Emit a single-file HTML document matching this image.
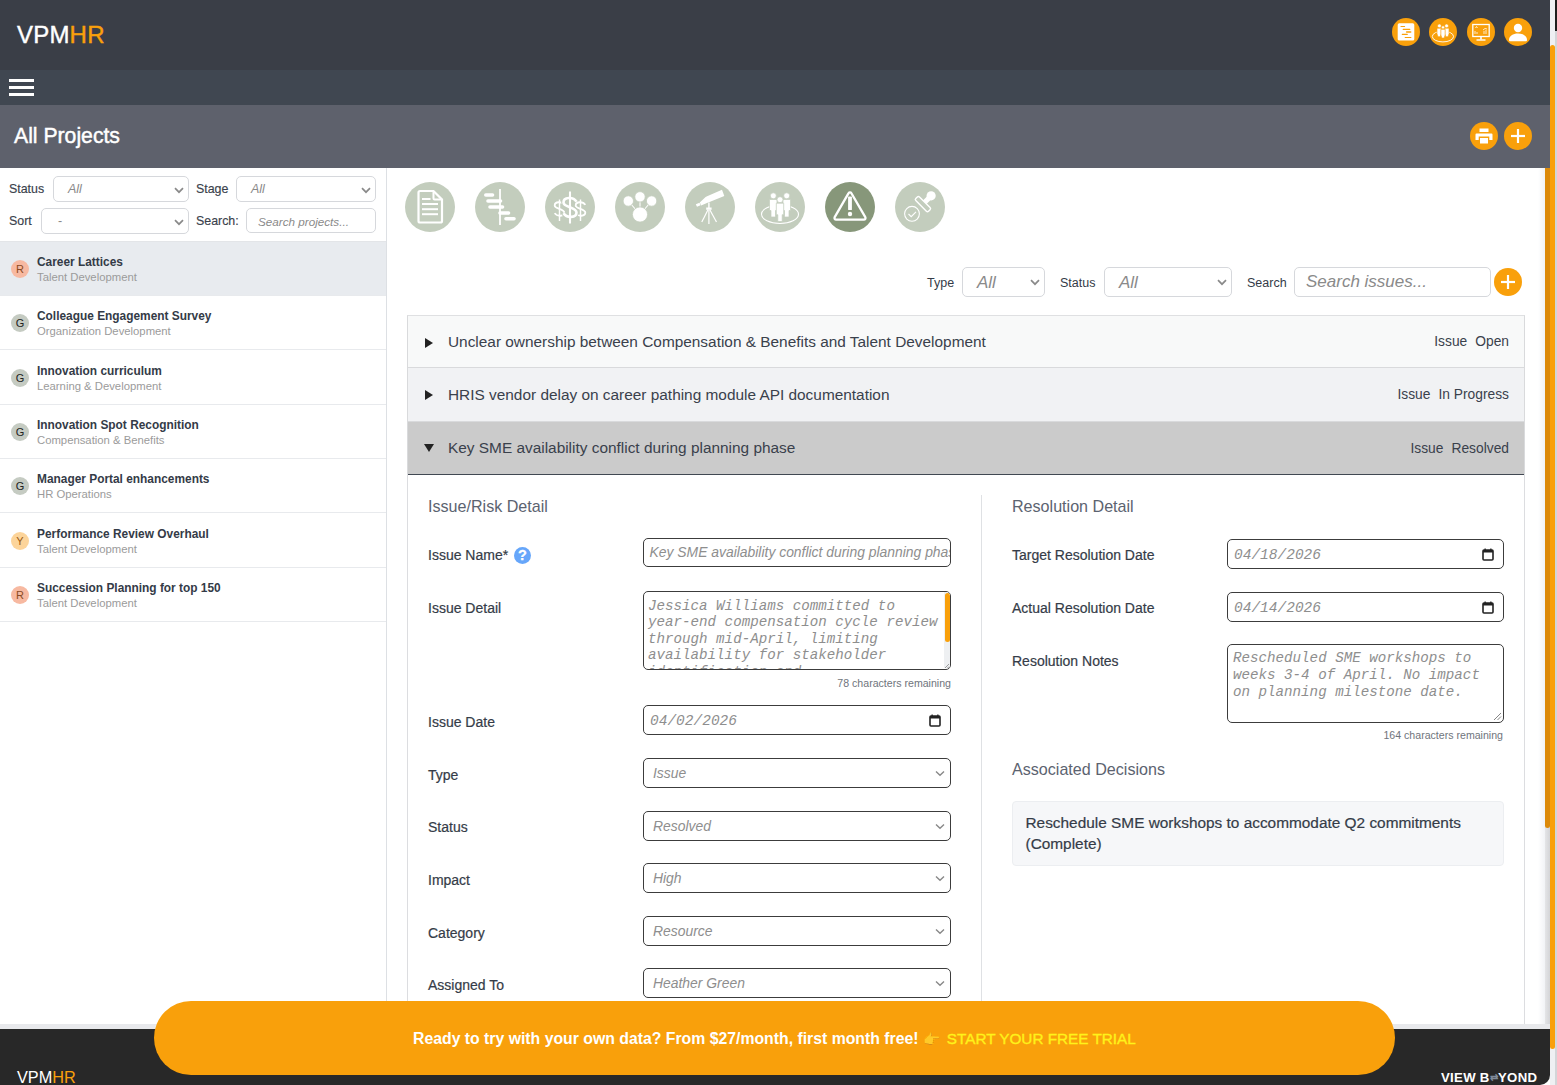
<!DOCTYPE html>
<html><head><meta charset="utf-8">
<style>
*{box-sizing:border-box;margin:0;padding:0}
html,body{width:1557px;height:1085px;overflow:hidden;background:#fff;font-family:"Liberation Sans",sans-serif;color:#343b47}
.a{position:absolute}
#top{left:0;top:0;width:1550px;height:70px;background:#3a3e47}
#nav{left:0;top:70px;width:1550px;height:35px;background:#404751}
#ttl{left:0;top:105px;width:1550px;height:63px;background:#5e616c}
.ob{position:absolute;width:28px;height:28px;border-radius:50%;background:#f9a00b}
.ob svg{position:absolute;left:0;top:0}
#side{left:0;top:168px;width:387px;height:860px;border-right:1px solid #dde0e4;background:#fff}
.lbl{position:absolute;font-size:12.4px;color:#3a414c;-webkit-text-stroke:0.15px #3a414c}
.fsel{position:absolute;border:1px solid #d6d8dc;border-radius:5px;background:#fff;height:26px}
.fsel i{position:absolute;font-size:12.5px;color:#8a8a8a;top:5px}
.chev{position:absolute;width:6.5px;height:6.5px;border-right:1.6px solid #8a8a8a;border-bottom:1.6px solid #8a8a8a;transform:rotate(45deg)}
.pi{position:absolute;left:0;width:386px;height:54px;border-bottom:1px solid #e8eaed}
.pi .dot{position:absolute;left:11px;top:18px;width:18px;height:18px;border-radius:50%;font-size:11px;text-align:center;line-height:18px}
.pi b{position:absolute;left:37px;top:13px;font-size:11.9px;color:#343b47;white-space:nowrap}
.pi span{position:absolute;left:37px;top:29px;font-size:11.3px;color:#9b9b9b;white-space:nowrap}
.mc{position:absolute;top:182px;width:50px;height:50px;border-radius:50%;background:#c3cdbd}
.mc svg{position:absolute;left:0;top:0}
.row{position:absolute;left:407px;width:1118px;height:53px;border:1px solid #d9dadc;border-top:none}
.row .t{position:absolute;left:40px;font-size:15.4px;line-height:1;color:#3a414c;white-space:nowrap}
.row .r{position:absolute;right:15px;font-size:13.8px;line-height:1;color:#3a414c;white-space:nowrap}
.flab{position:absolute;font-size:14px;color:#343b47;white-space:nowrap}
.inp{position:absolute;border:1.3px solid #3c3c3c;border-radius:5px;background:#fff}
.ph{position:absolute;font-style:italic;color:#8e8e8e;white-space:nowrap}
.mono{font-family:"Liberation Mono",monospace}
</style></head><body>
<div id="top" class="a">
 <div class="a" style="left:17px;top:20px;font-size:24px;line-height:30px;letter-spacing:0.2px;color:#fff;-webkit-text-stroke:0.4px #fff">VPM<span style="color:#f9a00b;-webkit-text-stroke:0.4px #f9a00b">HR</span></div>
 <div class="ob" style="left:1392px;top:18px"><svg width="28" height="28" viewBox="0 0 28 28"><rect x="5.7" y="5.3" width="16.6" height="17.2" rx="1.6" fill="#fff"/><g stroke="#f9a00b" stroke-width="1.1" stroke-linecap="round"><line x1="9" y1="8.5" x2="12.6" y2="8.5"/><line x1="11.2" y1="11.4" x2="17.8" y2="11.4"/><line x1="14.6" y1="14" x2="18.7" y2="14" stroke-width="1.5"/><line x1="10.3" y1="16.4" x2="15.3" y2="16.4"/><line x1="13.2" y1="19.5" x2="18.9" y2="19.5"/></g></svg></div>
 <div class="ob" style="left:1429px;top:18px"><svg width="28" height="28" viewBox="0 0 28 28"><ellipse cx="13.9" cy="18.5" rx="10.6" ry="5.4" fill="none" stroke="#fff" stroke-width="0.9"/><g fill="#fff" stroke="#f9a00b" stroke-width="0.6"><circle cx="10.4" cy="7.9" r="1.9"/><circle cx="17.6" cy="7.9" r="1.9"/><path d="M8 10.2h4.2v5.5l-1 3h-2.2l-1-3z"/><path d="M15.8 10.2h4.2v5.5l-1 3h-2.2l-1-3z"/><circle cx="14" cy="9.4" r="1.6"/><path d="M11.9 11.3h4.2v5.8l-1 3h-2.2l-1-3z"/></g></svg></div>
 <div class="ob" style="left:1467px;top:18px"><svg width="28" height="28" viewBox="0 0 28 28"><rect x="5.8" y="6.5" width="16.4" height="12" fill="none" stroke="#fff" stroke-width="1.3"/><rect x="13.2" y="18.5" width="1.6" height="3" fill="#fff"/><rect x="9.5" y="21.3" width="9" height="1.4" fill="#fff"/><g stroke="#fff" stroke-width="0.8" fill="none"><path d="M8 16V13M10 16v-2M17 16v-3M19 16v-4M16 12l2-1.5 2 0.5"/><path d="M8.5 10l1-1.5 1 1.5"/></g></svg></div>
 <div class="ob" style="left:1504px;top:18px"><svg width="28" height="28" viewBox="0 0 28 28"><circle cx="14" cy="10" r="4.2" fill="#fff"/><path d="M5 22c0-4 4-6.5 9-6.5s9 2.5 9 6.5c0 .8-.5 1.3-1.3 1.3H6.3C5.5 23.3 5 22.8 5 22z" fill="#fff"/></svg></div>
</div>
<div id="nav" class="a">
 <div class="a" style="left:9px;top:9px;width:25px;height:3px;background:#fff"></div>
 <div class="a" style="left:9px;top:16px;width:25px;height:3px;background:#fff"></div>
 <div class="a" style="left:9px;top:23px;width:25px;height:3px;background:#fff"></div>
</div>
<div id="ttl" class="a">
 <div class="a" style="left:14px;top:18px;font-size:21.2px;line-height:26px;color:#fff;-webkit-text-stroke:0.45px #fff">All Projects</div>
 <div class="ob" style="left:1470px;top:17px"><svg width="28" height="28" viewBox="0 0 28 28"><g fill="#fff"><rect x="9.5" y="6.5" width="9" height="3.5"/><path d="M6.5 11.5h15a1 1 0 0 1 1 1V18h-3.2v-3.5H8.7V18H5.5v-5.5a1 1 0 0 1 1-1z"/><rect x="10" y="16" width="8" height="5.5"/></g></svg></div>
 <div class="ob" style="left:1504px;top:17px"><svg width="28" height="28" viewBox="0 0 28 28"><g stroke="#fff" stroke-width="2.2"><line x1="14" y1="7" x2="14" y2="21"/><line x1="7" y1="14" x2="21" y2="14"/></g></svg></div>
</div>
<div id="side" class="a">
 <div class="lbl" style="left:9px;top:14px">Status</div>
 <div class="fsel" style="left:53px;top:8px;width:136px"><i style="left:14px">All</i><svg class="a" style="right:4.5px;top:9.5px" width="10" height="7" viewBox="0 0 10 7"><path d="M1 1.2L5 5.2L9 1.2" fill="none" stroke="#8a8a8a" stroke-width="1.7"/></svg></div>
 <div class="lbl" style="left:196px;top:14px">Stage</div>
 <div class="fsel" style="left:236px;top:8px;width:140px"><i style="left:14px">All</i><svg class="a" style="right:4.5px;top:9.5px" width="10" height="7" viewBox="0 0 10 7"><path d="M1 1.2L5 5.2L9 1.2" fill="none" stroke="#8a8a8a" stroke-width="1.7"/></svg></div>
 <div class="lbl" style="left:9px;top:46px">Sort</div>
 <div class="fsel" style="left:41px;top:40px;width:148px"><i style="left:16px;font-style:normal">-</i><svg class="a" style="right:4.5px;top:9.5px" width="10" height="7" viewBox="0 0 10 7"><path d="M1 1.2L5 5.2L9 1.2" fill="none" stroke="#8a8a8a" stroke-width="1.7"/></svg></div>
 <div class="lbl" style="left:196px;top:46px">Search:</div>
 <div class="fsel" style="left:246px;top:40px;width:130px;height:25px"><i style="left:11px;font-size:11.7px;top:5.5px">Search projects...</i></div>
 <div class="a" style="left:0;top:73px;width:386px;height:1px;background:#e3e5e8"></div>
</div>
<div class="a" style="left:0;top:0">
<div class="pi" style="top:242px;background:#e8ebef;"><div class="dot" style="background:#f7b9a1;color:#8a4a22">R</div><b>Career Lattices</b><span>Talent Development</span></div>
<div class="pi" style="top:296.35px;"><div class="dot" style="background:#c5cbc2;color:#222">G</div><b>Colleague Engagement Survey</b><span>Organization Development</span></div>
<div class="pi" style="top:350.70px;"><div class="dot" style="background:#c5cbc2;color:#222">G</div><b>Innovation curriculum</b><span>Learning &amp; Development</span></div>
<div class="pi" style="top:404.59999999999997px;"><div class="dot" style="background:#c5cbc2;color:#222">G</div><b>Innovation Spot Recognition</b><span>Compensation &amp; Benefits</span></div>
<div class="pi" style="top:458.79999999999995px;"><div class="dot" style="background:#c5cbc2;color:#222">G</div><b>Manager Portal enhancements</b><span>HR Operations</span></div>
<div class="pi" style="top:513.75px;"><div class="dot" style="background:#fcd49a;color:#9a5a10">Y</div><b>Performance Review Overhaul</b><span>Talent Development</span></div>
<div class="pi" style="top:568.10px;"><div class="dot" style="background:#f7b9a1;color:#8a4a22">R</div><b>Succession Planning for top 150</b><span>Talent Development</span></div>
</div>
<div class="mc" style="left:405px;background:#c3cdbd"><svg width="50" height="50" viewBox="0 0 50 50"><path d="M13.5 10.5a1.5 1.5 0 0 1 1.5-1.5h13.5l8.5 8.5v21.5a1.5 1.5 0 0 1-1.5 1.5H15a1.5 1.5 0 0 1-1.5-1.5z" fill="none" stroke="#fff" stroke-width="2.2"/><path d="M28.5 9v7.5a1 1 0 0 0 1 1H37" fill="none" stroke="#fff" stroke-width="2"/><g stroke="#fff" stroke-width="2"><line x1="17" y1="17" x2="25.5" y2="17"/><line x1="17" y1="22" x2="33" y2="22"/><line x1="17" y1="27.2" x2="33" y2="27.2"/><line x1="17" y1="32.2" x2="33" y2="32.2"/></g></svg></div>
<div class="mc" style="left:475px;background:#c3cdbd"><svg width="50" height="50" viewBox="0 0 50 50"><g stroke="#fff" stroke-linecap="round"><line x1="25" y1="7" x2="25" y2="43" stroke-width="1.8" stroke-linecap="butt"/><g stroke-width="3.6"><line x1="10.8" y1="13" x2="17.5" y2="13"/><line x1="13" y1="19" x2="25.5" y2="19"/><line x1="15" y1="25" x2="27.5" y2="25"/><line x1="25" y1="31" x2="33.5" y2="31"/><line x1="31" y1="36.8" x2="39" y2="36.8"/></g></g></svg></div>
<div class="mc" style="left:545px;background:#c3cdbd"><svg width="50" height="50" viewBox="0 0 50 50"><path d="M19.30 22.88C16.90 19.12 9.70 19.50 9.70 23.40C9.70 27.00 19.30 26.62 19.30 30.60C19.30 34.50 12.10 34.88 9.70 31.12" fill="none" stroke="#c3cdbd" stroke-width="3.8"/><path d="M19.30 22.88C16.90 19.12 9.70 19.50 9.70 23.40C9.70 27.00 19.30 26.62 19.30 30.60C19.30 34.50 12.10 34.88 9.70 31.12" fill="none" stroke="#fff" stroke-width="1.8"/><line x1="14.5" y1="17.5" x2="14.5" y2="39" stroke="#fff" stroke-width="1.44"/><path d="M40.30 22.88C37.90 19.12 30.70 19.50 30.70 23.40C30.70 27.00 40.30 26.62 40.30 30.60C40.30 34.50 33.10 34.88 30.70 31.12" fill="none" stroke="#c3cdbd" stroke-width="3.8"/><path d="M40.30 22.88C37.90 19.12 30.70 19.50 30.70 23.40C30.70 27.00 40.30 26.62 40.30 30.60C40.30 34.50 33.10 34.88 30.70 31.12" fill="none" stroke="#fff" stroke-width="1.8"/><line x1="35.5" y1="17.5" x2="35.5" y2="39" stroke="#fff" stroke-width="1.44"/><path d="M31.50 19.73C28.25 14.47 18.50 15.00 18.50 20.46C18.50 25.50 31.50 24.98 31.50 30.54C31.50 36.00 21.75 36.52 18.50 31.27" fill="none" stroke="#c3cdbd" stroke-width="4.6"/><path d="M31.50 19.73C28.25 14.47 18.50 15.00 18.50 20.46C18.50 25.50 31.50 24.98 31.50 30.54C31.50 36.00 21.75 36.52 18.50 31.27" fill="none" stroke="#fff" stroke-width="2.6"/><line x1="25" y1="9.5" x2="25" y2="41.5" stroke="#fff" stroke-width="2.08"/></svg></div>
<div class="mc" style="left:615px;background:#c3cdbd"><svg width="50" height="50" viewBox="0 0 50 50"><g stroke="#fff" stroke-width="1.1"><line x1="13.3" y1="19" x2="25" y2="32.5"/><line x1="36.6" y1="19" x2="25" y2="32.5"/><line x1="25" y1="15" x2="25" y2="32.5"/></g><g fill="#fff" stroke="#c3cdbd" stroke-width="0.8"><circle cx="13.3" cy="19" r="5.2"/><circle cx="25" cy="14.8" r="5.2"/><circle cx="36.6" cy="19" r="5.2"/><circle cx="25" cy="32.5" r="7.6"/></g></svg></div>
<div class="mc" style="left:685px;background:#c3cdbd"><svg width="50" height="50" viewBox="0 0 50 50"><g fill="#fff"><path d="M10.8 22.3l1.2 2.4 3.6-1.5-1.1-2.4z"/><path d="M14.8 20.6l1.3 2.9 7-2.9 1.4-0.6 14.8-6.1-2.3-6.2-14.9 6.5-1.5 0.7z"/><rect x="23.2" y="20.5" width="1.4" height="5.5"/><path d="M21.2 25.5h5.4v2.3h-5.4z"/></g><g stroke="#fff" stroke-width="1.2" fill="none"><line x1="23" y1="27.8" x2="16.8" y2="40"/><line x1="23.9" y1="27.8" x2="23.9" y2="42"/><line x1="24.8" y1="27.8" x2="31.5" y2="40"/></g></svg></div>
<div class="mc" style="left:755px;background:#c3cdbd"><svg width="50" height="50" viewBox="0 0 50 50"><ellipse cx="25" cy="32.3" rx="18.5" ry="9.2" fill="none" stroke="#fff" stroke-width="1.1"/><g fill="#fff" stroke="#c3cdbd" stroke-width="0.7"><circle cx="18.3" cy="13.8" r="3"/><circle cx="31.7" cy="13.8" r="3"/><path d="M14.5 17.5h7.5v11h-1.5v6.5h-4.5v-6.5h-1.5z"/><path d="M28 17.5h7.5v11H34v6.5h-4.5v-6.5H28z"/><circle cx="25" cy="17.7" r="3"/><path d="M21.3 21.2h7.4v11.5h-1.5v6.8h-4.4v-6.8h-1.5z"/></g></svg></div>
<div class="mc" style="left:825px;background:#87977a"><svg width="50" height="50" viewBox="0 0 50 50"><path d="M23.6 11.2a1.6 1.6 0 0 1 2.8 0L40.3 35.2a1.6 1.6 0 0 1-1.4 2.4H11.1a1.6 1.6 0 0 1-1.4-2.4z" fill="none" stroke="#fff" stroke-width="2.3" stroke-linejoin="round"/><rect x="23.1" y="14.6" width="3.8" height="13.5" rx="0.6" fill="#fff"/><circle cx="25" cy="32" r="2.2" fill="#fff"/></svg></div>
<div class="mc" style="left:895px;background:#c3cdbd"><svg width="50" height="50" viewBox="0 0 50 50"><g transform="rotate(45 28 22)"><rect x="19" y="19.5" width="18" height="5.2" rx="1.5" fill="none" stroke="#fff" stroke-width="1.4"/><rect x="25.5" y="13" width="5" height="6.5" fill="#fff"/><circle cx="28" cy="10.5" r="4.6" fill="#fff"/></g><circle cx="17" cy="31.8" r="7.4" fill="none" stroke="#fff" stroke-width="1.1"/><path d="M13.5 32l2.7 2.7 4.8-4.8" fill="none" stroke="#fff" stroke-width="1.1"/></svg></div>
<div class="flab" style="left:927px;top:276px;font-size:12.5px">Type</div>
<div class="fsel" style="left:962px;top:267px;width:83px;height:30px"><i style="left:14px;top:5px;font-size:17px">All</i><svg class="a" style="right:4.5px;top:10.5px" width="10" height="7" viewBox="0 0 10 7"><path d="M1 1.2L5 5.2L9 1.2" fill="none" stroke="#8a8a8a" stroke-width="1.7"/></svg></div>
<div class="flab" style="left:1060px;top:276px;font-size:12.5px">Status</div>
<div class="fsel" style="left:1104px;top:267px;width:128px;height:30px"><i style="left:14px;top:5px;font-size:17px">All</i><svg class="a" style="right:4.5px;top:10.5px" width="10" height="7" viewBox="0 0 10 7"><path d="M1 1.2L5 5.2L9 1.2" fill="none" stroke="#8a8a8a" stroke-width="1.7"/></svg></div>
<div class="flab" style="left:1247px;top:276px;font-size:12.5px">Search</div>
<div class="fsel" style="left:1294px;top:267px;width:197px;height:30px"><i style="left:11px;top:4px;font-size:17px">Search issues...</i></div>
<div class="ob" style="left:1494px;top:268px"><svg width="28" height="28" viewBox="0 0 28 28"><g stroke="#fff" stroke-width="2.2"><line x1="14" y1="7" x2="14" y2="21"/><line x1="7" y1="14" x2="21" y2="14"/></g></svg></div>
<div class="row" style="top:315px;height:53px;border-top:1px solid #dfe0e2;background:#f8f9f9"><svg class="a" style="left:16.5px;top:21.5px" width="8" height="10"><path d="M0 0L8 5L0 10z" fill="#222"/></svg><div class="t" style="top:17.5px">Unclear ownership between Compensation &amp; Benefits and Talent Development</div><div class="r" style="top:19px"><span>Issue</span><span style="margin-left:8px">Open</span></div></div>
<div class="row" style="top:368px;height:54px;background:#f1f2f4"><svg class="a" style="left:16.5px;top:21.5px" width="8" height="10"><path d="M0 0L8 5L0 10z" fill="#222"/></svg><div class="t" style="top:19px">HRIS vendor delay on career pathing module API documentation</div><div class="r" style="top:20px"><span>Issue</span><span style="margin-left:8px">In Progress</span></div></div>
<div class="row" style="top:422px;height:53px;background:#cbcbcb;border-bottom:1.5px solid #414852"><svg class="a" style="left:16px;top:22px" width="10" height="8"><path d="M0 0L10 0L5 8z" fill="#222"/></svg><div class="t" style="top:18.2px">Key SME availability conflict during planning phase</div><div class="r" style="top:19.8px"><span>Issue</span><span style="margin-left:8px">Resolved</span></div></div>
<div class="a" style="left:407px;top:474px;width:1px;height:552px;background:#dcdde0"></div>
<div class="a" style="left:1524px;top:474px;width:1px;height:552px;background:#dcdde0"></div>
<div class="a" style="left:981px;top:495px;width:1px;height:531px;background:#dfe1e4"></div>
<div class="a" style="left:428px;top:498.4px;font-size:16.1px;line-height:1;white-space:nowrap;color:#5c6370">Issue/Risk Detail</div>
<div class="a" style="left:428px;top:548.3px;font-size:14px;line-height:1;white-space:nowrap;color:#353c48;-webkit-text-stroke:0.2px #353c48">Issue Name*</div>
<div class="a" style="left:514px;top:547px;width:17px;height:17px;border-radius:50%;background:#66a6fa;color:#fff;font-size:14.5px;font-weight:bold;text-align:center;line-height:17.5px;-webkit-text-stroke:0.3px #fff">?</div>
<div class="a" style="left:428px;top:600.9px;font-size:14px;line-height:1;white-space:nowrap;color:#353c48;-webkit-text-stroke:0.2px #353c48">Issue Detail</div>
<div class="a" style="left:428px;top:714.9px;font-size:14px;line-height:1;white-space:nowrap;color:#353c48;-webkit-text-stroke:0.2px #353c48">Issue Date</div>
<div class="a" style="left:428px;top:768.3px;font-size:14px;line-height:1;white-space:nowrap;color:#353c48;-webkit-text-stroke:0.2px #353c48">Type</div>
<div class="a" style="left:428px;top:820.3px;font-size:14px;line-height:1;white-space:nowrap;color:#353c48;-webkit-text-stroke:0.2px #353c48">Status</div>
<div class="a" style="left:428px;top:872.8px;font-size:14px;line-height:1;white-space:nowrap;color:#353c48;-webkit-text-stroke:0.2px #353c48">Impact</div>
<div class="a" style="left:428px;top:926.4px;font-size:14px;line-height:1;white-space:nowrap;color:#353c48;-webkit-text-stroke:0.2px #353c48">Category</div>
<div class="a" style="left:428px;top:977.8px;font-size:14px;line-height:1;white-space:nowrap;color:#353c48;-webkit-text-stroke:0.2px #353c48">Assigned To</div>
<div class="inp" style="left:643px;top:538px;width:308px;height:29px;overflow:hidden"><div class="ph" style="left:5.5px;top:7px;font-size:13.9px;line-height:1">Key SME availability conflict during planning phase</div></div>
<div class="inp" style="left:643px;top:591px;width:308px;height:79px;overflow:hidden"><div class="ph mono" style="left:4px;top:6.8px;font-size:14.2px;line-height:1">Jessica&nbsp;Williams&nbsp;committed&nbsp;to</div><div class="ph mono" style="left:4px;top:23.3px;font-size:14.2px;line-height:1">year-end&nbsp;compensation&nbsp;cycle&nbsp;review</div><div class="ph mono" style="left:4px;top:39.8px;font-size:14.2px;line-height:1">through&nbsp;mid-April,&nbsp;limiting</div><div class="ph mono" style="left:4px;top:56.3px;font-size:14.2px;line-height:1">availability&nbsp;for&nbsp;stakeholder</div><div class="ph mono" style="left:4px;top:72.8px;font-size:14.2px;line-height:1">identification&nbsp;and&nbsp;...</div><div class="a" style="right:0;top:0;width:6px;height:76px;background:#eef0f2"></div><div class="a" style="right:0.5px;top:1px;width:5px;height:49px;border-radius:3px;background:#f9a00b"></div><svg class="a" style="right:0;bottom:0" width="6" height="6"><path d="M5 1L1 5M5 3.5L3.5 5" stroke="#888" stroke-width="0.8"/></svg></div>
<div class="a" style="right:606px;top:678.0px;font-size:10.6px;line-height:1;white-space:nowrap;color:#6f747c">78 characters remaining</div>
<div class="inp" style="left:643px;top:705px;width:308px;height:30px"><div class="ph mono" style="left:6px;top:8.0px;font-size:14.5px;line-height:1">04/02/2026</div><svg class="a" style="right:9px;top:8px" width="12" height="13" viewBox="0 0 12 13"><rect x="1" y="2" width="10" height="10" rx="1" fill="none" stroke="#222" stroke-width="1.6"/><rect x="1" y="2" width="10" height="2.5" fill="#222"/><rect x="2.5" y="0.5" width="1.3" height="2" fill="#222"/><rect x="8.2" y="0.5" width="1.3" height="2" fill="#222"/></svg></div>
<div class="inp" style="left:643px;top:758px;width:308px;height:30px"><div class="ph" style="left:9px;top:8.2px;font-size:13.9px;line-height:1">Issue</div><svg class="a" style="right:5px;top:11px" width="10" height="7" viewBox="0 0 10 7"><path d="M1 1.5L5 5.2L9 1.5" fill="none" stroke="#888" stroke-width="1.4"/></svg></div>
<div class="inp" style="left:643px;top:810.5px;width:308px;height:30px"><div class="ph" style="left:9px;top:8.2px;font-size:13.9px;line-height:1">Resolved</div><svg class="a" style="right:5px;top:11px" width="10" height="7" viewBox="0 0 10 7"><path d="M1 1.5L5 5.2L9 1.5" fill="none" stroke="#888" stroke-width="1.4"/></svg></div>
<div class="inp" style="left:643px;top:863px;width:308px;height:30px"><div class="ph" style="left:9px;top:8.2px;font-size:13.9px;line-height:1">High</div><svg class="a" style="right:5px;top:11px" width="10" height="7" viewBox="0 0 10 7"><path d="M1 1.5L5 5.2L9 1.5" fill="none" stroke="#888" stroke-width="1.4"/></svg></div>
<div class="inp" style="left:643px;top:916px;width:308px;height:30px"><div class="ph" style="left:9px;top:8.2px;font-size:13.9px;line-height:1">Resource</div><svg class="a" style="right:5px;top:11px" width="10" height="7" viewBox="0 0 10 7"><path d="M1 1.5L5 5.2L9 1.5" fill="none" stroke="#888" stroke-width="1.4"/></svg></div>
<div class="inp" style="left:643px;top:968px;width:308px;height:30px"><div class="ph" style="left:9px;top:8.2px;font-size:13.9px;line-height:1">Heather Green</div><svg class="a" style="right:5px;top:11px" width="10" height="7" viewBox="0 0 10 7"><path d="M1 1.5L5 5.2L9 1.5" fill="none" stroke="#888" stroke-width="1.4"/></svg></div>
<div class="a" style="left:1012px;top:498.4px;font-size:16.1px;line-height:1;white-space:nowrap;color:#5c6370">Resolution Detail</div>
<div class="a" style="left:1012px;top:548.2px;font-size:14px;line-height:1;white-space:nowrap;color:#353c48;-webkit-text-stroke:0.2px #353c48">Target Resolution Date</div>
<div class="a" style="left:1012px;top:601.3px;font-size:14px;line-height:1;white-space:nowrap;color:#353c48;-webkit-text-stroke:0.2px #353c48">Actual Resolution Date</div>
<div class="a" style="left:1012px;top:653.7px;font-size:14px;line-height:1;white-space:nowrap;color:#353c48;-webkit-text-stroke:0.2px #353c48">Resolution Notes</div>
<div class="inp" style="left:1227px;top:538.5px;width:277px;height:30px"><div class="ph mono" style="left:6px;top:8.0px;font-size:14.5px;line-height:1">04/18/2026</div><svg class="a" style="right:9px;top:8px" width="12" height="13" viewBox="0 0 12 13"><rect x="1" y="2" width="10" height="10" rx="1" fill="none" stroke="#222" stroke-width="1.6"/><rect x="1" y="2" width="10" height="2.5" fill="#222"/><rect x="2.5" y="0.5" width="1.3" height="2" fill="#222"/><rect x="8.2" y="0.5" width="1.3" height="2" fill="#222"/></svg></div>
<div class="inp" style="left:1227px;top:591.5px;width:277px;height:30px"><div class="ph mono" style="left:6px;top:8.0px;font-size:14.5px;line-height:1">04/14/2026</div><svg class="a" style="right:9px;top:8px" width="12" height="13" viewBox="0 0 12 13"><rect x="1" y="2" width="10" height="10" rx="1" fill="none" stroke="#222" stroke-width="1.6"/><rect x="1" y="2" width="10" height="2.5" fill="#222"/><rect x="2.5" y="0.5" width="1.3" height="2" fill="#222"/><rect x="8.2" y="0.5" width="1.3" height="2" fill="#222"/></svg></div>
<div class="inp" style="left:1227px;top:643.5px;width:277px;height:79px;overflow:hidden"><div class="ph mono" style="left:5px;top:6.8px;font-size:14.2px;line-height:1">Rescheduled&nbsp;SME&nbsp;workshops&nbsp;to</div><div class="ph mono" style="left:5px;top:23.8px;font-size:14.2px;line-height:1">weeks&nbsp;3-4&nbsp;of&nbsp;April.&nbsp;No&nbsp;impact</div><div class="ph mono" style="left:5px;top:40.8px;font-size:14.2px;line-height:1">on&nbsp;planning&nbsp;milestone&nbsp;date.</div><svg class="a" style="right:1px;bottom:1px" width="10" height="10"><path d="M9 2L2 9M9 5.5L5.5 9" stroke="#777" stroke-width="0.9"/></svg></div>
<div class="a" style="right:54px;top:730.0px;font-size:10.6px;line-height:1;white-space:nowrap;color:#6f747c">164 characters remaining</div>
<div class="a" style="left:1012px;top:761.4px;font-size:16.1px;line-height:1;white-space:nowrap;color:#5c6370">Associated Decisions</div>
<div class="a" style="left:1012px;top:801px;width:492px;height:65px;background:#f6f7f9;border:1px solid #eceef1;border-radius:4px"></div>
<div class="a" style="left:1025.5px;top:814.7px;font-size:15.4px;line-height:1;white-space:nowrap;color:#353c48;-webkit-text-stroke:0.2px #353c48">Reschedule SME workshops to accommodate Q2 commitments</div>
<div class="a" style="left:1025.5px;top:835.9px;font-size:15.4px;line-height:1;white-space:nowrap;color:#353c48;-webkit-text-stroke:0.2px #353c48">(Complete)</div>
<div class="a" style="left:1538px;top:168px;width:7px;height:856px;background:linear-gradient(90deg,#fff,#f1f3f6)"></div>
<div class="a" style="left:1545px;top:168px;width:5px;height:856px;background:linear-gradient(90deg,#e4e5e7,#d3d4d7)"></div>
<div class="a" style="left:1545px;top:168px;width:5px;height:660px;border-radius:0 0 2.5px 2.5px;background:#dc8a0a"></div>
<div class="a" style="left:0;top:1024px;width:1550px;height:5px;background:#e8e9ec"></div>
<div class="a" style="left:0;top:1029px;width:1550px;height:56px;background:#282828;border-bottom-right-radius:10px"></div>
<div class="a" style="left:17px;top:1068.8px;font-size:16.3px;line-height:1;color:#fff">VPM<span style="color:#f9a00b">HR</span></div>
<div class="a" style="left:1441px;top:1071px;font-size:13.2px;line-height:1;font-weight:bold;color:#fff;letter-spacing:0.3px;white-space:nowrap">VIEW B<span style="color:#7f8a99;font-size:10px;vertical-align:1px">&#8644;</span>YOND</div>
<div class="a" style="left:154px;top:1001px;width:1241px;height:74px;border-radius:37px;background:#f9a00b"></div>
<div class="a" style="left:413px;top:1030.5px;font-size:15.8px;line-height:1;font-weight:bold;color:#fff;white-space:nowrap">Ready to try with your own data? From $27/month, first month free! <span style="font-weight:normal;font-size:14px">&#128073;</span> <span style="margin-left:2.5px;font-weight:normal;color:#fff21a;font-size:15.3px;-webkit-text-stroke:0.35px #fff21a">START YOUR FREE TRIAL</span></div>
<div class="a" style="left:1550px;top:0;width:5px;height:1085px;background:#eff0f3"></div>
<div class="a" style="left:1550px;top:45px;width:5px;height:1004px;border-radius:2.5px;background:#f9a00b"></div>
<div class="a" style="left:1555px;top:0;width:2px;height:31px;background:#1e1e1e"></div>
<div class="a" style="left:1555px;top:31px;width:2px;height:1054px;background:#d3d5d8"></div>
</body></html>
